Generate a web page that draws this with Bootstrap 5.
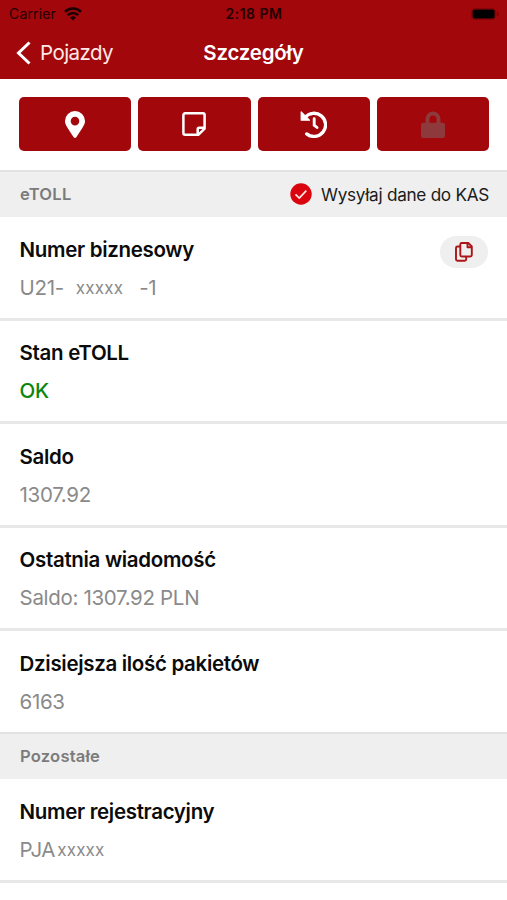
<!DOCTYPE html>
<html lang="pl">
<head>
<meta charset="utf-8">
<meta name="viewport" content="width=device-width, initial-scale=1">
<title>Szczegóły</title>
<link href="https://cdn.jsdelivr.net/npm/bootstrap@5.3.0/dist/css/bootstrap.min.css" rel="stylesheet">
<style>
body { font-family: Inter, "Liberation Sans", sans-serif; color: #0b0b0b; height: 900px; overflow: hidden; }
svg { display: block; }
.app-head { background: #a1070b; height: 79px; }
.status { height: 28px; padding: 0 8px 0 9px; font-size: 14px; line-height: 28px; color: #230102; letter-spacing: .15px; }
.status-time { font-weight: 600; letter-spacing: .5px; }
.side { flex: 1 1 0; }
.titlebar { height: 49px; padding: 0 16px; font-size: 20.5px; line-height: 49px; color: #fff; }
.back { color: #ffe9e6; gap: 9px; letter-spacing: -.55px; }
.title { font-weight: 600; letter-spacing: -.22px; }
.actions { display: grid; grid-template-columns: repeat(4, 1fr); height: 91px; padding: 18px 18px 19px 19px; gap: 7px; }
.action { background: #a1070b; border-radius: 5px; color: #fff; border: 0; }
.locked { color: #8e3a3d; }
.section-head { background: #efefef; border-top: 2px solid #e2e2e2; height: 47px; padding: 0 18px 0 20px; }
.section-name { font-size: 16.6px; font-weight: 600; color: #7b7b7b; letter-spacing: .2px; }
.kas { font-size: 17.2px; gap: 9px; color: #1b1b1b; letter-spacing: -.29px; }
.item { height: 103.5px; border-bottom: 3px solid #e8e8e8; padding: 18.6px 19px 0 19.6px; }
.item-last { height: 101.2px; border-bottom: 0; }
.item-name { font-size: 20.5px; line-height: 28px; font-weight: 600; white-space: nowrap; letter-spacing: -.32px; }
.item-value { font-size: 20.5px; line-height: 28px; margin-top: 10px; color: #8a8a8a; white-space: pre; letter-spacing: -.33px; }
.masked { font-size: 17px; letter-spacing: .2px; }
.masked-plate { margin-left: 2px; }
.ok { color: #0b860b; font-weight: 500; }
.copy { width: 48px; height: 32px; background: #efefef; }
</style>
</head>
<body class="bg-white">
<header class="app-head">
  <div class="status d-flex align-items-center">
    <div class="side d-flex align-items-center gap-2"><span>Carrier</span>
      <svg width="18" height="14" viewBox="0 0 18 14" fill="none" stroke="#1a0001" stroke-width="2.6"><path d="M1 4.800a11.400 11.400 0 0 1 16 0M3.800 8.200a7.400 7.400 0 0 1 10.400 0"/><path d="M9 13.600l-2.900-3a4.200 4.200 0 0 1 5.800 0z" fill="#1a0001" stroke="none"/></svg>
    </div>
    <span class="status-time">2:18 PM</span>
    <div class="side d-flex justify-content-end">
      <svg width="28" height="12" viewBox="0 0 28 12"><rect x=".6" y=".6" width="24" height="10.800" rx="2.800" fill="none" stroke="#850508"/><rect x="1.600" y="1.500" width="22" height="9" rx="1.800" fill="#000"/><path d="M26 4v4q1.500-.6 1.500-2t-1.500-2" fill="#6b0406"/></svg>
    </div>
  </div>
  <div class="titlebar d-flex align-items-center">
    <div class="side"><div class="back d-flex align-items-center">
      <svg width="15" height="24" viewBox="0 0 15 24" fill="none" stroke="#fff" stroke-width="3"><path d="M13.500 1.500L2.500 12l11 10.500"/></svg><span>Pojazdy</span></div></div>
    <span class="title">Szczegóły</span>
    <div class="side"></div>
  </div>
</header>
<main>
  <div class="actions">
    <button class="action d-flex align-items-center justify-content-center" aria-label="Mapa">
      <svg width="20" height="27" viewBox="0 0 20 27" fill="currentColor"><path fill-rule="evenodd" d="M10 0a10 10 0 0 1 10 10c0 4-3 7.500-8.700 16.300q-1.300 1.400-2.600 0C3 17.500 0 14 0 10A10 10 0 0 1 10 0zm0 5.800a4.300 4.300 0 1 0 0 8.600 4.300 4.300 0 0 0 0-8.600z"/></svg></button>
    <button class="action d-flex align-items-center justify-content-center" aria-label="Notatka">
      <svg width="24" height="24" viewBox="0 0 24 24" fill="none" stroke="currentColor" stroke-width="2.500" stroke-linejoin="round"><path d="M3 1.300h18a1.600 1.600 0 0 1 1.600 1.600v13.800l-6 6H3a1.600 1.600 0 0 1-1.600-1.600V2.900A1.600 1.600 0 0 1 3 1.300z"/><path d="M22.500 15.700h-5.300a1.500 1.500 0 0 0-1.500 1.500v5.300"/></svg></button>
    <button class="action d-flex align-items-center justify-content-center" aria-label="Historia">
      <svg width="27" height="27" viewBox="0 0 27 27" fill="none" stroke="currentColor" stroke-width="3.300" stroke-linecap="round"><path d="M5 6.500A11.600 11.600 0 1 1 6.700 22.900"/><path d="M14.200 7.800v6.400l2.800 2.300" stroke-width="2.900"/><path d="M1.200.9v8.300h8.300z" fill="currentColor" stroke-width="1.200" stroke-linejoin="round"/></svg></button>
    <button class="action locked d-flex align-items-center justify-content-center" aria-label="Blokada">
      <svg width="24" height="27" viewBox="0 0 24 27"><path d="M6.500 14V8a5.500 5.500 0 0 1 11 0v6" fill="none" stroke="currentColor" stroke-width="4"/><rect y="11.700" width="24" height="15.300" rx="2.300" fill="currentColor"/></svg></button>
  </div>
  <div class="section-head d-flex align-items-center justify-content-between">
    <span class="section-name">eTOLL</span>
    <span class="kas d-flex align-items-center"><svg width="22" height="22" viewBox="0 0 22 22"><circle cx="11" cy="11" r="10.700" fill="#d9040d"/><path d="M5.500 11.300l3.800 3.700 7-7.300" fill="none" stroke="#ffe9e6" stroke-width="1.700"/></svg><span>Wysyłaj dane do KAS</span></span>
  </div>
  <div class="item d-flex justify-content-between">
    <div><div class="item-name">Numer biznesowy</div><div class="item-value d-flex"><span>U21-</span><span class="masked ms-2 ps-1">xxxxx</span><span class="ms-3">-1</span></div></div>
    <button class="copy btn rounded-pill border-0 p-0 d-flex align-items-center justify-content-center" aria-label="Kopiuj">
      <svg width="18" height="20" viewBox="0 0 18 20" fill="none" stroke="#ab1418" stroke-width="1.900" stroke-linejoin="round"><path d="M6.800 1h6.500l3.500 3.500V13a1.500 1.500 0 0 1-1.500 1.500H6.800A1.500 1.500 0 0 1 5.300 13V2.500A1.500 1.500 0 0 1 6.800 1z"/><path d="M12.500 1.200v4h4.100M5.300 4.500H2.500A1.500 1.500 0 0 0 1 6v11.300a1.500 1.500 0 0 0 1.500 1.500h7.200a1.500 1.500 0 0 0 1.500-1.500v-2.800"/></svg></button>
  </div>
  <div class="item"><div class="item-name">Stan eTOLL</div><div class="item-value ok">OK</div></div>
  <div class="item"><div class="item-name">Saldo</div><div class="item-value">1307.92</div></div>
  <div class="item"><div class="item-name">Ostatnia wiadomość</div><div class="item-value">Saldo: 1307.92 PLN</div></div>
  <div class="item item-last"><div class="item-name">Dzisiejsza ilość pakietów</div><div class="item-value">6163</div></div>
  <div class="section-head d-flex align-items-center"><span class="section-name">Pozostałe</span></div>
  <div class="item"><div class="item-name">Numer rejestracyjny</div><div class="item-value d-flex"><span>PJA</span><span class="masked masked-plate">xxxxx</span></div></div>
</main>
<script src="https://cdn.jsdelivr.net/npm/bootstrap@5.3.0/dist/js/bootstrap.bundle.min.js"></script>
</body>
</html>
